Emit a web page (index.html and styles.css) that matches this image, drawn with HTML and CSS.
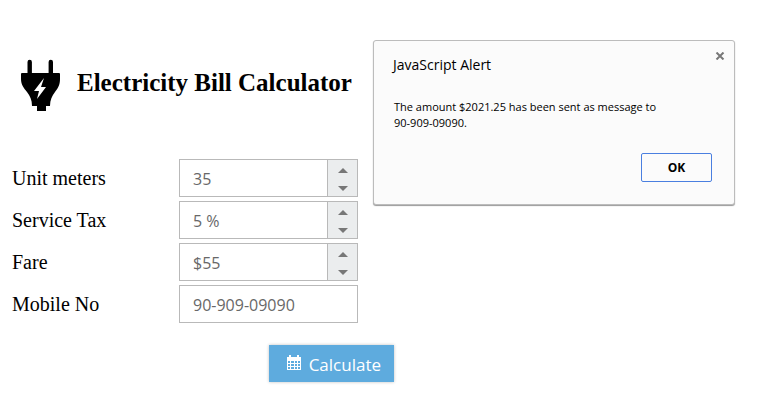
FILE: index.html
```html
<!DOCTYPE html>
<html lang="en">
<head>
<meta charset="utf-8">
<meta name="viewport" content="width=device-width, initial-scale=1">
<title>Electricity Bill Calculator</title>
<link rel="stylesheet" href="styles.css">
</head>
<body>
<div class="page">
  <main class="calculator">
    <header class="header">
      <svg class="logo" viewBox="0 0 40 52" aria-hidden="true">
        <path d="M7.500 15V3a2.200 2.200 0 0 1 4.400 0v12zM28.600 15V3a2.200 2.200 0 0 1 4.400 0v12z"/>
        <path d="M2 14h37q1 0 1 1v5c0 6-2 9-5 13-3 4-5 8-5 14h-4v5h-9v-5h-5c0-6-2-10-5-14-3-4-6-7-6-13v-5q0-1 1-1z"/>
        <path class="bolt" d="M24 19l-10 13h5l-2 8 9-12h-5z"/>
      </svg>
      <h1 class="title">Electricity Bill Calculator</h1>
    </header>
    <form class="form">
      <label for="units">Unit meters</label>
      <div class="field">
        <input id="units" type="text" value="35">
        <div class="spinner">
          <button type="button" class="step" aria-label="Increase unit meters"><svg viewBox="0 0 10 5"><path d="M0 5L5 0l5 5z"/></svg></button>
          <button type="button" class="step" aria-label="Decrease unit meters"><svg viewBox="0 0 10 5"><path d="M0 0h10L5 5z"/></svg></button>
        </div>
      </div>
      <label for="tax">Service Tax</label>
      <div class="field">
        <input id="tax" type="text" value="5 %">
        <div class="spinner">
          <button type="button" class="step" aria-label="Increase service tax"><svg viewBox="0 0 10 5"><path d="M0 5L5 0l5 5z"/></svg></button>
          <button type="button" class="step" aria-label="Decrease service tax"><svg viewBox="0 0 10 5"><path d="M0 0h10L5 5z"/></svg></button>
        </div>
      </div>
      <label for="fare">Fare</label>
      <div class="field">
        <input id="fare" type="text" value="$55">
        <div class="spinner">
          <button type="button" class="step" aria-label="Increase fare"><svg viewBox="0 0 10 5"><path d="M0 5L5 0l5 5z"/></svg></button>
          <button type="button" class="step" aria-label="Decrease fare"><svg viewBox="0 0 10 5"><path d="M0 0h10L5 5z"/></svg></button>
        </div>
      </div>
      <label for="mobile">Mobile No</label>
      <div class="field">
        <input id="mobile" type="text" value="90-909-09090">
      </div>
    </form>
    <button type="button" class="calculate">
      <svg class="calendar" viewBox="0 0 14 15" aria-hidden="true">
        <path fill-rule="evenodd" d="M0 2h2V0h2v2h6V0h2v2h2v13H0zM1 6v2h2V6zM4 6v2h3V6zM8 6v2h2V6zM11 6v2h2V6zM1 9v2h2V9zM4 9v2h3V9zM8 9v2h2V9zM11 9v2h2V9zM1 12v2h2v-2zM4 12v2h3v-2zM8 12v2h2v-2zM11 12v2h2v-2z"/>
      </svg>
      <span>Calculate</span>
    </button>
  </main>
  <section class="alert" role="alertdialog" aria-labelledby="alert-title" aria-describedby="alert-text">
    <div class="alert-head">
      <h2 id="alert-title">JavaScript Alert</h2>
      <button type="button" class="close" aria-label="Close"><svg viewBox="0 0 10 8"><path d="M1.500 .5l7 7M8.500 .5l-7 7"/></svg></button>
    </div>
    <p id="alert-text">The amount $2021.25 has been sent as message to<br>90-909-09090.</p>
    <button type="button" class="ok">OK</button>
  </section>
</div>
</body>
</html>
```
FILE: styles.css
```css
* {
  box-sizing: border-box;
}

body {
  margin: 0;
  background: #fff;
  color: #000;
  font-family: "Liberation Serif", serif;
}

button,
input {
  margin: 0;
  padding: 0;
  border: 0;
  background: none;
  font-family: "Open Sans", sans-serif;
}

svg {
  display: block;
}

.page {
  display: grid;
  grid-template-columns: minmax(0, 346fr) minmax(0, 362fr);
  column-gap: 15px;
  align-items: start;
  padding: 40px 39px 20px 12px;
}

.calculator {
  display: flex;
  flex-direction: column;
}

.header {
  display: flex;
  align-items: center;
  gap: 17px;
  padding: 19px 0 0 8px;
}

.logo {
  width: 40px;
  height: 52px;
}

.bolt {
  fill: #fff;
}

.title {
  margin: 0 0 4px;
  font-size: 25px;
  line-height: 30px;
  white-space: nowrap;
}

.form {
  display: grid;
  grid-template-columns: 167px minmax(0, 1fr);
  row-gap: 4px;
  align-items: center;
  margin-top: 48px;
}

.form label {
  font-size: 20px;
  line-height: 24px;
}

.field {
  display: flex;
  height: 38px;
  border: 1px solid #b9b9b9;
}

.field input {
  flex: 1;
  min-width: 0;
  padding: 2px 13px 0;
  color: #686868;
  font-size: 16px;
}

.spinner {
  display: flex;
  flex-direction: column;
  width: 30px;
  border-left: 1px solid #b9b9b9;
  background: #ebedee;
}

.step {
  display: flex;
  flex: 1;
  align-items: center;
  justify-content: center;
  padding-top: 2px;
}

.step svg {
  width: 10px;
  height: 5px;
  fill: #777;
}

.calculate {
  display: flex;
  align-items: center;
  justify-content: center;
  align-self: flex-end;
  gap: 8px;
  height: 37px;
  margin: 22px -36px 0 0;
  padding: 2px 13px 0 18px;
  background: #5eabde;
  box-shadow: 0 0 3px rgba(0, 0, 0, 0.25);
  color: #fff;
  font-size: 17px;
  line-height: 24px;
}

.calendar {
  width: 14px;
  height: 15px;
  margin-bottom: 4px;
  fill: #fff;
}

.alert {
  display: flex;
  flex-direction: column;
  padding: 11px 9px 22px 19px;
  border: 1px solid #bcbcbc;
  border-radius: 3px;
  background: #fbfbfb;
  box-shadow: 0 1px 1px #999;
  font-family: "Open Sans", sans-serif;
}

.alert-head {
  display: flex;
  justify-content: space-between;
}

.alert h2 {
  margin: 2px 0 0;
  font-size: 14px;
  font-weight: 400;
  line-height: 22px;
}

.close {
  display: flex;
  height: 8px;
}

.close svg {
  width: 10px;
  height: 8px;
  fill: none;
  stroke: #777;
  stroke-width: 2;
}

.alert p {
  margin: 23px 0 0 1px;
  font-size: 11px;
  line-height: 16px;
}

.ok {
  align-self: flex-end;
  width: 71px;
  height: 29px;
  margin: 22px 13px 0 0;
  border: 1px solid #4a7fe0;
  border-radius: 2px;
  font-size: 12px;
  font-weight: 700;
}
```
